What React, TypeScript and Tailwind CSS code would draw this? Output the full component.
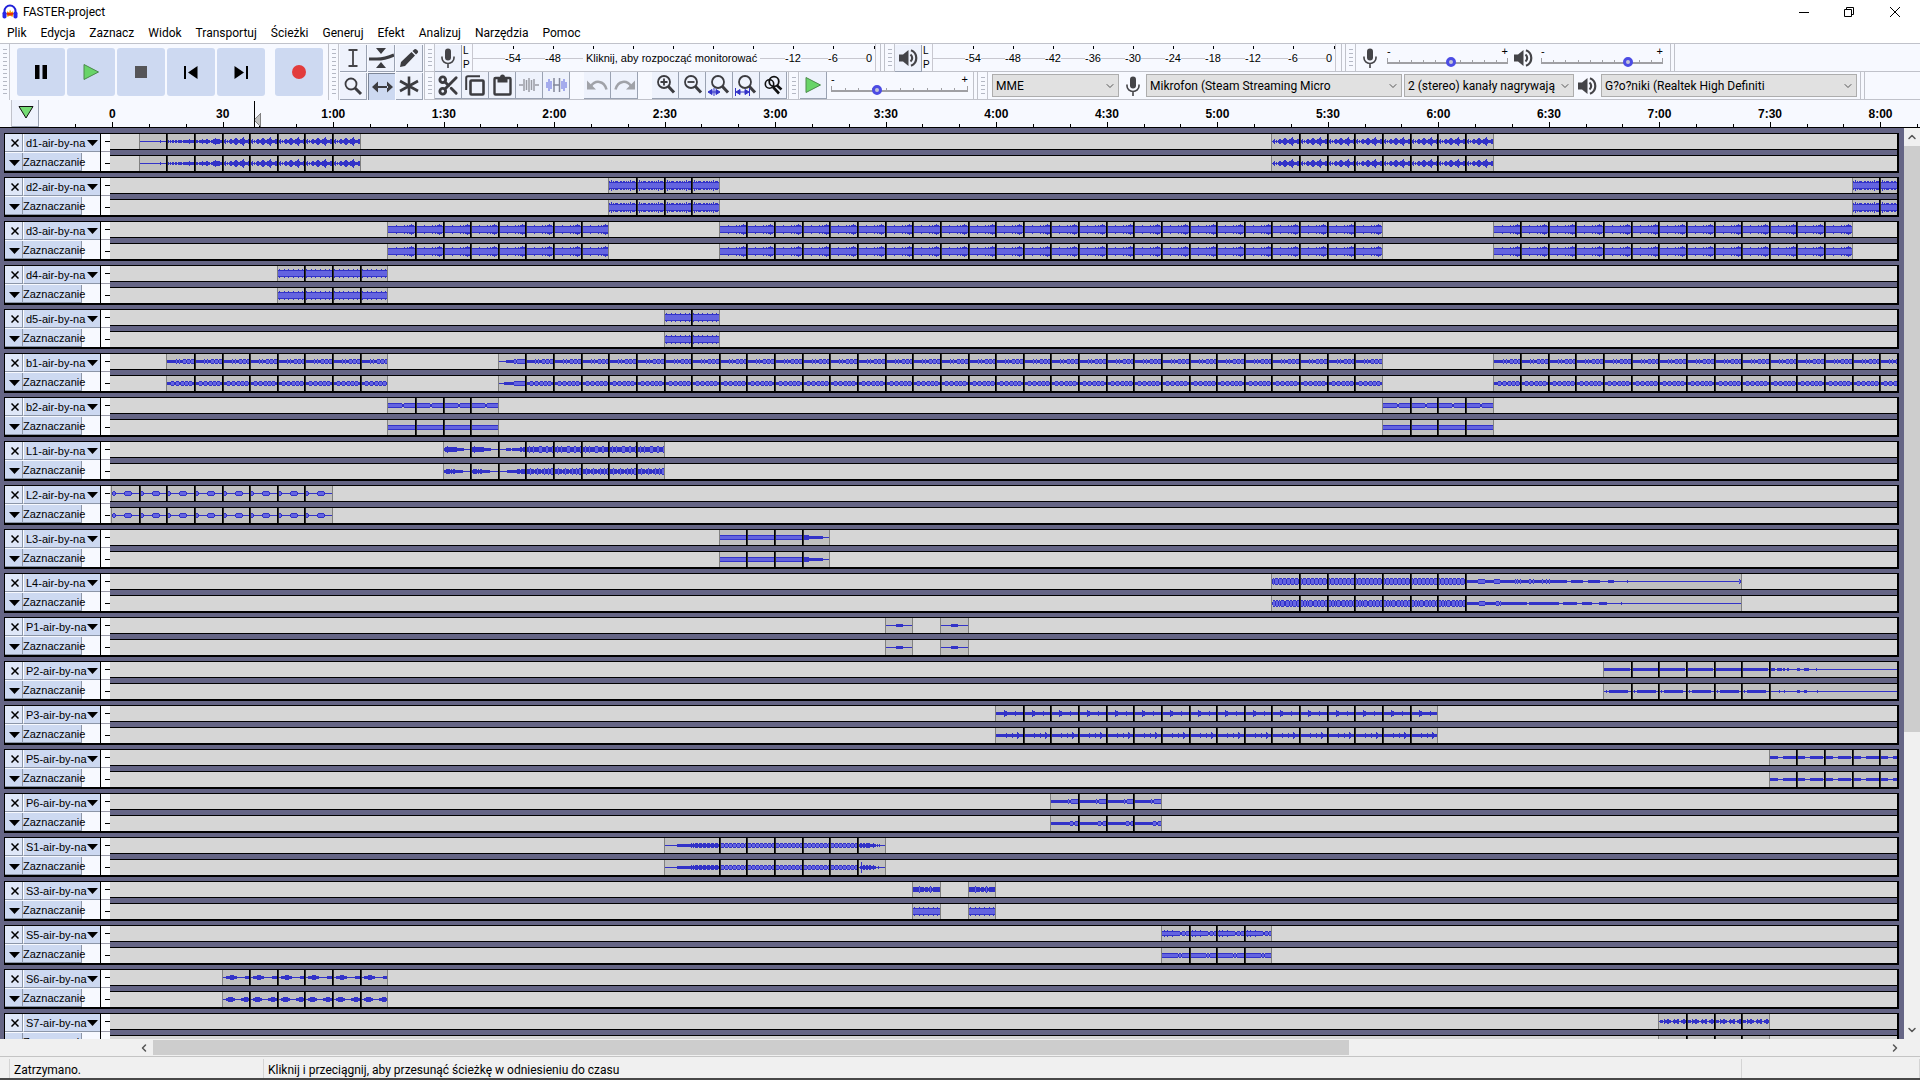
import { useState, type ReactNode } from "react";
import { ChevronDown, ChevronLeft, ChevronRight, ChevronUp, Scissors } from "lucide-react";

const PX_PER_SEC = 3.684;
const BAR = PX_PER_SEC * 7.5;

type Clip = { from: number; to: number; top: string; bottom: string; rms: number };

type TrackData = { name: string; clips: Clip[] };

// one clip per bar between from and to, all with the same wave
const bars = (from: number, to: number, top: string, bottom = top, rms = 9): Clip[] =>
  Array.from({ length: to - from }, (_, i) => ({
    from: from + i,
    to: from + i + 1,
    top,
    bottom,
    rms,
  }));

const clip = (from: number, to: number, top: string, bottom = top, rms = 9): Clip => ({
  from,
  to,
  top,
  bottom,
  rms,
});

// each digit is the half height of one pixel column
const D1 = "0120101221123321122342111221";
const D1_SOFT = "0000000000000000000010000000";
const D1_MID = "0101011011011110111111211111";
const D1_RISE = "0110111211122110112232222111";
const D2 = "4353434443344344343435344434";
const D3 = "3333333343333333433434454430";
const D4 = "3433334333433334333343334333";
const B1 = "1111111112112111222122212222";
const B1_LOW = "1111222112221122212221222111";
const B2 = "2222222222222211222222222222";
const L1 = "2223222322222333222233222232";
const L1_LOW = "1222322212232221223222322332";
const L2 = "1221000000001222222100000000";
const L3 = "2222222222222222222222222222";
const L4 = "2323332333233323332333233322";
const L4_LOW = "1332332323332233323323332332";
const P3 = "1111111132211111111211111111";
const P3_LOW = "1111111111211111211113211111";
const P5 = "1111111100000111111111111100";
const P6 = "1111111111111111121122222222";
const S1 = "1222122212221222122212221222";
const S3 = "2222223222212221232122222222";
const S5 = "2232232222322222221122212222";
const S6 = "0001111222211100000000111111";
const S7 = "0111021122110012112200112211";

const L4_TAIL =
  "21" + "1".repeat(10) + "2222222" + "1".repeat(9) + "222222" + "1".repeat(14) +
  "12121121111111122112111111112111211211111111111111111" +
  "0000" + "1".repeat(12) + "00000" + "1".repeat(12) + "00000000" + "1111110" +
  "00000000000010" + "0".repeat(110);
const L4_TAIL_LOW =
  "11" + "1".repeat(11) + "222222" + "1".repeat(10) + "122212" +
  "1".repeat(26) + "00" + "1".repeat(30) + "0000" + "1".repeat(14) + "00000" +
  "1".repeat(10) + "0000000" + "11111111" + "0".repeat(14) + "1" + "0".repeat(120);

const tracks: TrackData[] = [
  {
    name: "d1-air-by-na",
    clips: [
      clip(1, 2, D1_SOFT),
      clip(2, 3, D1_MID),
      clip(3, 4, D1_RISE),
      ...bars(4, 9, D1),
      ...bars(42, 50, D1),
    ],
  },
  { name: "d2-air-by-na", clips: [...bars(18, 22, D2, D2, 2), ...bars(63, 66, D2, D2, 2)] },
  {
    name: "d3-air-by-na",
    clips: [...bars(10, 18, D3, D3, 2), ...bars(22, 46, D3, D3, 2), ...bars(50, 63, D3, D3, 2)],
  },
  { name: "d4-air-by-na", clips: bars(6, 10, D4, D4, 2) },
  { name: "d5-air-by-na", clips: bars(20, 22, D4, D4, 2) },
  {
    name: "b1-air-by-na",
    clips: [
      ...bars(2, 10, B1, B1_LOW, 1),
      clip(14, 15, "0000000111111112212222222222", "0000011111111112222222222222", 1),
      ...bars(15, 46, B1, B1_LOW, 1),
      ...bars(50, 66, B1, B1_LOW, 1),
    ],
  },
  { name: "b2-air-by-na", clips: [...bars(10, 14, B2, L3, 1), ...bars(46, 50, B2, L3, 1)] },
  {
    name: "L1-air-by-na",
    clips: [
      ...bars(12, 14, "1223222222222111111100000000", "1122221212211111111000000000"),
      clip(14, 15, "0000000111110111111112212222", "0000000011111111112221222222"),
      ...bars(15, 20, L1, L1_LOW, 2),
    ],
  },
  { name: "L2-air-by-na", clips: bars(0, 8, L2, L2, 1) },
  {
    name: "L3-air-by-na",
    clips: [...bars(22, 25, L3, L3, 1), clip(25, 26, "1222221111111111111100000000")],
  },
  {
    name: "L4-air-by-na",
    clips: [...bars(42, 49, L4, L4_LOW, 2), clip(49, 59, L4_TAIL, L4_TAIL_LOW, 1)],
  },
  {
    name: "P1-air-by-na",
    clips: [clip(28, 29, "0000000000111111100000000000"), clip(30, 31, "0000000000111111100000000000")],
  },
  {
    name: "P2-air-by-na",
    clips: [
      ...bars(54, 60, "1111111111111111111111111100", "0010011111111111111111110000"),
      clip(
        60,
        66,
        "01111001111101100110000000011100001111100000001" + "0".repeat(125),
        "0000000001000010000000000001110000111000000000010" + "0".repeat(125)
      ),
    ],
  },
  { name: "P3-air-by-na", clips: bars(32, 48, P3, P3_LOW) },
  { name: "P5-air-by-na", clips: bars(60, 66, P5) },
  { name: "P6-air-by-na", clips: bars(34, 38, P6, "1111111111111111111222112222", 1) },
  {
    name: "S1-air-by-na",
    clips: [
      clip(20, 22, "000000000000" + "1".repeat(13) + "121212221222122212221222122212"),
      ...bars(22, 27, S1, S1, 1),
      clip(27, 28, "0122122122221112110101000000", "0015122122122112110010000000"),
    ],
  },
  { name: "S3-air-by-na", clips: [clip(29, 30, S3, D4, 2), clip(31, 32, S3, D4, 2)] },
  { name: "S5-air-by-na", clips: bars(38, 42, S5, "2222222222222222122122222222", 1) },
  { name: "S6-air-by-na", clips: bars(4, 10, S6, "0001122222110000001112222110") },
  { name: "S7-air-by-na", clips: bars(56, 60, S7) },
];

const wavePath = (wave: string, x: number, width: number, limit = 9) => {
  let d = "";
  for (let i = 0; i < width; i++) {
    const full = Number(wave[i % wave.length]);
    // the light band only shows inside columns that are taller than it
    if (limit < 9 && full <= limit) continue;
    const h = Math.min(full, limit);
    d += `M${x + i} ${7 - h}h1v${2 * h + 1}h-1z`;
  }
  return d;
};

const Lane = ({ clips, channel }: { clips: Clip[]; channel: "top" | "bottom" }) => (
  <svg className="block h-[15px] w-full bg-[#d6d6d6]" shapeRendering="crispEdges">
    {clips.map((c, i) => {
      const x = Math.round(BAR * c.from + 1);
      const end = Math.round(BAR * c.to + 1);
      const joined = i > 0 && clips[i - 1].to === c.from;
      return (
        <g key={c.from}>
          <rect x={x} y="0" width={end - x} height="15" fill="#c0c0c0" />
          <rect x={end} y="0" width="1" height="15" fill="#808080" />
          <path d={wavePath(c[channel], x + 1, end - x - 1)} fill="#3232c8" />
          {c.rms < 9 && (
            <path d={wavePath(c[channel], x + 1, end - x - 1, c.rms)} fill="#6464e0" />
          )}
          <rect x={x} y="0" width="1" height="15" fill={joined ? "#000" : "#808080"} />
          {joined && <rect x={x + 1} y="0" width="1" height="15" fill="#303030" />}
        </g>
      );
    })}
  </svg>
);

const Triangle = () => (
  <svg width="11" height="6" viewBox="0 0 11 6" className="shrink-0">
    <path d="M0 0H11L5.5 6Z" fill="#000" />
  </svg>
);

const Track = ({ track }: { track: TrackData }) => (
  <div className="flex h-10 shrink-0 border-t border-r-2 border-b-2 border-l border-black">
    <div className="flex w-[95px] shrink-0 flex-col gap-px bg-[#f7f9ff] text-[11px] leading-4">
      <div className="flex h-[18px]">
        <button
          aria-label={`Zamknij ${track.name}`}
          className="flex w-[18px] items-center justify-center border-r border-b border-[#8c96a8] bg-[#dfe7f8] pt-px pl-[2px]"
        >
          <svg width="8" height="8" viewBox="0 0 8 8">
            <path d="M0.5 0.5L7.5 7.5M7.5 0.5L0.5 7.5" stroke="#000" strokeWidth="1.5" />
          </svg>
        </button>
        <button className="flex flex-1 items-center border-b border-l border-b-[#8c96a8] border-l-white bg-[#cdd9f1] pl-[2px]">
          <span className="w-[61px] text-left whitespace-nowrap">{track.name}</span>
          <Triangle />
        </button>
      </div>
      <div className="flex h-[18px]">
        <button
          aria-label={`Zwiń ${track.name}`}
          className="flex w-[18px] items-center justify-center border-r border-b border-[#8c96a8] bg-[#cdd9f1] pt-[2px] pl-[2px]"
        >
          <Triangle />
        </button>
        <button className="flex w-[59px] border-r border-b border-[#8c96a8] bg-[#cdd9f1] pt-px whitespace-nowrap">
          Zaznaczanie
        </button>
      </div>
    </div>
    <div className="flex w-[10px] shrink-0 flex-col border-l border-black bg-[#fbfcff]">
      <div className="flex h-[18px] items-center justify-end border-b border-[#9a9aa8] pb-[2px]">
        <div className="h-px w-[5px] bg-black" />
      </div>
      <div className="flex flex-1 items-center justify-end pt-[4px]">
        <div className="h-px w-[5px] bg-black" />
      </div>
    </div>
    <div className="min-w-0 flex-1">
      <Lane clips={track.clips} channel="top" />
      <div className="h-[7px] border-y border-black bg-[#656585]" />
      <Lane clips={track.clips} channel="bottom" />
    </div>
  </div>
);

const Grabber = () => (
  <div className="flex w-[10px] shrink-0 justify-center border-r border-[#c4c6ce] py-[5px]">
    <div className="w-1 bg-[repeating-linear-gradient(#b4b8c4_0_1px,transparent_1px_4px)]" />
  </div>
);

const Divider = () => <div className="w-[5px] shrink-0 border-x border-[#c0c2ca]" />;

const ToolButton = ({
  label,
  active,
  children,
}: {
  label: string;
  active?: boolean;
  children: ReactNode;
}) => (
  <button
    aria-label={label}
    title={label}
    className={
      active
        ? "flex h-[27px] w-[27px] shrink-0 items-center justify-center border-t border-l border-[#7c8698] bg-[#cdd9f1]"
        : "flex h-[27px] w-[27px] shrink-0 items-center justify-center border-r border-b border-[#9aa2b2] bg-[#eef2fc]"
    }
  >
    {children}
  </button>
);

const BigButton = ({ label, children }: { label: string; children: ReactNode }) => (
  <button
    aria-label={label}
    title={label}
    className="flex size-12 items-center justify-center rounded-[3px] bg-[#cdd9f1]"
  >
    {children}
  </button>
);

const MicIcon = () => (
  <svg width="14" height="20" viewBox="0 0 14 20" className="shrink-0">
    <rect x="4" y="0.5" width="6" height="12" rx="3" fill="#444448" />
    <path d="M1 8.5V10a6 5.5 0 0 0 12 0V8.5M7 15.5V20" stroke="#444448" strokeWidth="1.6" fill="none" />
  </svg>
);

const SpeakerIcon = () => (
  <svg width="19" height="18" viewBox="0 0 19 18" className="shrink-0">
    <path d="M0 5.5H4L9.5 1V17L4 12.5H0Z" fill="#444448" />
    <path d="M11.5 5.5a4.5 4.5 0 0 1 0 7M12 1.2a8.4 8.4 0 0 1 0 15.6" stroke="#444448" strokeWidth="2.2" fill="none" />
  </svg>
);

const ZoomIcon = ({ children }: { children?: ReactNode }) => (
  <svg width="22" height="22" viewBox="0 0 22 22" fill="none" stroke="#3c3c40">
    <circle cx="10" cy="8" r="6" strokeWidth="1.8" />
    <path d="M14.2 12.2L20 18.5" strokeWidth="3" />
    {children}
  </svg>
);

const PlayIcon = () => (
  <svg width="17" height="18" viewBox="0 0 17 18">
    <path d="M1 1.5L15.5 9L1 16.5Z" fill="#68d468" stroke="#4a8a4a" />
  </svg>
);

const LevelSlider = ({
  label,
  start,
  className,
}: {
  label: string;
  start: number;
  className: string;
}) => {
  const [value, setValue] = useState(start);

  return (
    <div className={className}>
      <div className="flex justify-between text-[11px] leading-[9px]">
        <span>-</span>
        <span>+</span>
      </div>
      <div className="grid items-center [&>*]:col-start-1 [&>*]:row-start-1">
        <svg width="100%" height="10" shapeRendering="crispEdges">
          <rect x="0" y="5" width="100%" height="2" fill="#a0a0a4" />
          {Array.from({ length: 10 }, (_, i) => (
            <rect key={i} x={`${i * 10}%`} y="3" width="1" height="3" fill="#a0a0a4" />
          ))}
          <rect x="0" y="1" width="1" height="5" fill="#a0a0a4" />
          <rect x="99%" y="1" width="1" height="5" fill="#a0a0a4" />
        </svg>
        <input
          type="range"
          aria-label={label}
          value={value}
          onChange={(e) => setValue(Number(e.target.value))}
          className="m-0 h-3 w-full appearance-none bg-transparent [&::-webkit-slider-thumb]:size-[10px] [&::-webkit-slider-thumb]:appearance-none [&::-webkit-slider-thumb]:rounded-full [&::-webkit-slider-thumb]:border-[3px] [&::-webkit-slider-thumb]:border-[#4c4ce4] [&::-webkit-slider-thumb]:bg-[#c4c4d8]"
        />
      </div>
    </div>
  );
};

const levels = ["-54", "-48", "-42", "-36", "-30", "-24", "-18", "-12", "-6"];

const Meter = ({ message }: { message?: string }) => (
  <div className="flex">
    <div className="flex w-[10px] flex-col justify-between pl-px text-[10px] leading-[13px]">
      <span>L</span>
      <span>P</span>
    </div>
    <div className="relative flex w-[404px] border-x border-[#c8c8d0] bg-[linear-gradient(#c8c8d0,#c8c8d0)] bg-[length:100%_1px] bg-[position:0_14px] bg-no-repeat pl-5 text-[11px] leading-[15px]">
      {levels.map((level, i) => (
        <div key={level} className="flex w-10 flex-col items-center gap-[2px] pt-[2px]">
          <div className="h-[3px] w-px bg-black" />
          {/* the message takes the place of the labels in the middle */}
          {(!message || i < 2 || i > 6) && <span className="bg-[#f7f9ff]">{level}</span>}
        </div>
      ))}
      <div className="flex flex-1 flex-col items-end gap-[2px] pt-[2px]">
        <div className="h-[3px] w-px bg-black" />
        <span className="bg-[#f7f9ff] pr-[3px]">0</span>
      </div>
      {message && (
        <button className="absolute top-[7px] left-[110px] bg-[#f7f9ff] px-[3px] whitespace-nowrap">
          {message}
        </button>
      )}
    </div>
  </div>
);

const DeviceSelect = ({
  label,
  value,
  className,
}: {
  label: string;
  value: string;
  className: string;
}) => (
  <div className={`${className} grid h-[23px] shrink-0 items-center [&>*]:col-start-1 [&>*]:row-start-1`}>
    <select
      aria-label={label}
      className="h-full w-full min-w-0 appearance-none border border-[#adadad] bg-[#e1e1e1] pr-[18px] pl-[3px] font-[Roboto,'Open_Sans',sans-serif] text-[12px]"
    >
      <option>{value}</option>
    </select>
    <ChevronDown size={12} strokeWidth={2} color="#555" className="pointer-events-none mr-[3px] justify-self-end" />
  </div>
);

const TransportBar = () => (
  <div className="flex">
    <Grabber />
    <div className="flex items-center gap-[2px] pr-[5px] pl-[7px]">
      <BigButton label="Wstrzymaj">
        <svg width="12" height="14" viewBox="0 0 12 14">
          <path d="M0 0h4.5v14H0zM7.5 0H12v14H7.5z" fill="#000" />
        </svg>
      </BigButton>
      <BigButton label="Odtwarzaj">
        <PlayIcon />
      </BigButton>
      <BigButton label="Zatrzymaj">
        <svg width="12" height="12">
          <rect width="12" height="12" fill="#555558" />
        </svg>
      </BigButton>
      <BigButton label="Przejdź na początek">
        <svg width="14" height="13" viewBox="0 0 14 13">
          <path d="M0 0h2v13H0zM13.5 0v13L4 6.5z" fill="#000" />
        </svg>
      </BigButton>
      <BigButton label="Przejdź na koniec">
        <svg width="14" height="13" viewBox="0 0 14 13">
          <path d="M12 0h2v13h-2zM0.5 0v13L10 6.5z" fill="#000" />
        </svg>
      </BigButton>
      <div className="ml-2 flex">
        <BigButton label="Nagrywaj">
          <svg width="14" height="14">
            <circle cx="7" cy="7" r="7" fill="#e23c3c" />
          </svg>
        </BigButton>
      </div>
    </div>
  </div>
);

const ToolsBar = () => (
  <div className="flex border-l border-[#c0c2ca]">
    <Grabber />
    <div className="grid grid-cols-3 gap-px px-px pt-px">
      <ToolButton label="Zaznaczanie">
        <svg width="10" height="18" viewBox="0 0 10 18">
          <path d="M0.5 1H9.5M0.5 17H9.5M5 1V17" stroke="#444448" strokeWidth="1.8" />
        </svg>
      </ToolButton>
      <ToolButton label="Obwiednia">
        <svg width="25" height="22" viewBox="0 0 25 22">
          <path d="M7 1H17L12 7ZM7 21H17L12 15Z" fill="#3c3c40" />
          <path d="M0 12H8C14 12 18 11 25 8" stroke="#3c3c40" strokeWidth="3" fill="none" />
        </svg>
      </ToolButton>
      <ToolButton label="Rysowanie">
        <svg width="20" height="20" viewBox="0 0 20 20" fill="#3c3c40">
          <path d="M1 19L2 14L12.5 4L16 7.5L6 18ZM13.5 3L15.5 1.2Q16.5 0.5 17.5 1.5L18.8 2.8Q19.5 3.8 18.8 4.8L17 6.5Z" />
        </svg>
      </ToolButton>
      <ToolButton label="Powiększanie">
        <svg width="20" height="20" viewBox="0 0 20 20" fill="none" stroke="#3c3c40">
          <circle cx="8" cy="8" r="5.5" strokeWidth="1.8" />
          <path d="M12 12L18 18" strokeWidth="3" />
        </svg>
      </ToolButton>
      <ToolButton label="Przesuwanie w czasie" active>
        <svg width="21" height="12" viewBox="0 0 21 12">
          <path d="M0 6L6 0.5V11.5ZM21 6L15 0.5V11.5ZM5 5H16V7H5Z" fill="#3c3c40" />
        </svg>
      </ToolButton>
      <ToolButton label="Narzędzie uniwersalne">
        <svg width="20" height="20" viewBox="0 0 20 20">
          <path d="M10 0.5V19.5M1 5L19 15M19 5L1 15" stroke="#3c3c40" strokeWidth="2.6" />
        </svg>
      </ToolButton>
    </div>
  </div>
);

const LevelsRow = () => (
  <div className="flex h-[28px] border-b border-[#c0c2ca]">
    <Grabber />
    <div className="flex pt-px">
      <ToolButton label="Monitorowanie nagrywania">
        <MicIcon />
      </ToolButton>
    </div>
    <Meter message="Kliknij, aby rozpocząć monitorować" />
    <div className="ml-[4px] flex">
      <Divider />
    </div>
    <Grabber />
    <div className="flex pt-px">
      <ToolButton label="Monitorowanie odtwarzania">
        <SpeakerIcon />
      </ToolButton>
    </div>
    <Meter />
    <div className="ml-[5px] flex">
      <Divider />
    </div>
    <Grabber />
    <div className="flex items-center gap-[6px] px-[7px]">
      <MicIcon />
      <LevelSlider label="Głośność nagrywania" start={53} className="ml-[4px] w-[121px]" />
      <SpeakerIcon />
      <LevelSlider label="Głośność odtwarzania" start={73} className="ml-[2px] w-[122px]" />
    </div>
    <Divider />
  </div>
);

const EditRow = () => (
  <div className="flex h-[28px] border-b border-[#c0c2ca]">
    <Grabber />
    <div className="flex">
      <ToolButton label="Wytnij">
        <Scissors size={23} strokeWidth={3} color="#3c3c40" />
      </ToolButton>
      <ToolButton label="Kopiuj">
        <svg width="20" height="21" viewBox="0 0 20 21" fill="none" stroke="#3c3c40">
          <rect x="5.5" y="5.5" width="13" height="14" rx="1" strokeWidth="2.6" />
          <path d="M1.2 15V3Q1.2 1.2 3 1.2H15" strokeWidth="2" />
        </svg>
      </ToolButton>
      <ToolButton label="Wklej">
        <svg width="19" height="22" viewBox="0 0 19 22">
          <rect x="1.5" y="4" width="16" height="16.5" rx="1" fill="none" stroke="#3c3c40" strokeWidth="2.4" />
          <path d="M4.5 8.5V3.5H7Q7 0.5 9.5 0.5T12 3.5H14.5V8.5Z" fill="#3c3c40" />
        </svg>
      </ToolButton>
      <ToolButton label="Przytnij">
        <svg width="20" height="16" viewBox="0 0 20 16" stroke="#9a9ca4" strokeWidth="1.5">
          <path d="M0 8H4M16 8H20M5 2V14M7.5 3V13M10 1V15M12.5 3V13M15 2V14" />
        </svg>
      </ToolButton>
      <ToolButton label="Wycisz">
        <svg width="21" height="16" viewBox="0 0 21 16" strokeWidth="1.5" fill="none">
          <path d="M1 5V11M3 2V14M5 4V12M16 4V12M18 2V14M20 5V11" stroke="#8c94e8" />
          <path d="M7 8H14M8 1V15M13.5 1V15" stroke="#84889a" />
        </svg>
      </ToolButton>
    </div>
    <div className="ml-[14px] flex">
      <ToolButton label="Cofnij">
        <svg width="21" height="12" viewBox="0 0 21 12">
          <path d="M0 1.5V10.5H9Z" fill="#a0a2a8" />
          <path d="M4 7C8 1 17 1 19.5 10.5" fill="none" stroke="#a0a2a8" strokeWidth="2.5" />
        </svg>
      </ToolButton>
      <ToolButton label="Ponów">
        <svg width="21" height="12" viewBox="0 0 21 12">
          <path d="M21 1.5V10.5H12Z" fill="#a0a2a8" />
          <path d="M17 7C13 1 4 1 1.5 10.5" fill="none" stroke="#a0a2a8" strokeWidth="2.5" />
        </svg>
      </ToolButton>
    </div>
    <div className="ml-[14px] flex">
      <ToolButton label="Powiększ">
        <ZoomIcon>
          <path d="M6.5 8H13.5M10 4.5V11.5" strokeWidth="1.8" />
        </ZoomIcon>
      </ToolButton>
      <ToolButton label="Pomniejsz">
        <ZoomIcon>
          <path d="M6.5 8H13.5" strokeWidth="1.8" />
        </ZoomIcon>
      </ToolButton>
      <ToolButton label="Dopasuj zaznaczenie">
        <ZoomIcon>
          <path d="M0 18L4 15.5V20.5ZM12 18L8 15.5V20.5ZM6 14V22M4 18H8" fill="#3232c8" stroke="#3232c8" strokeWidth="1" />
        </ZoomIcon>
      </ToolButton>
      <ToolButton label="Dopasuj projekt">
        <ZoomIcon>
          <path d="M1 18L5 15.5V20.5ZM14 18L10 15.5V20.5ZM0.5 14V22M14.5 14V22M4 18H11" fill="#3232c8" stroke="#3232c8" strokeWidth="1" />
        </ZoomIcon>
      </ToolButton>
      <ToolButton label="Przełącz powiększenie">
        <svg width="20" height="20" viewBox="0 0 20 20" fill="none" stroke="#111">
          <circle cx="11" cy="6.5" r="4.8" strokeWidth="1.8" />
          <circle cx="6.5" cy="9" r="4.2" strokeWidth="1.6" />
          <path d="M13.5 10L18.5 14.5M10 12L16 18.5" strokeWidth="2.6" />
        </svg>
      </ToolButton>
    </div>
    <div className="ml-px flex border-l border-[#c0c2ca]">
      <Grabber />
    </div>
    <div className="flex pl-px">
      <ToolButton label="Odtwarzaj z prędkością">
        <PlayIcon />
      </ToolButton>
    </div>
    <LevelSlider label="Prędkość odtwarzania" start={32} className="mt-[3px] ml-[4px] w-[137px]" />
    <div className="ml-[5px] flex">
      <Divider />
    </div>
    <Grabber />
    <div className="flex items-center pr-[3px] pl-[4px]">
      <DeviceSelect label="Serwer dźwięku" value="MME" className="w-[127px]" />
      <div className="flex w-[27px] justify-center">
        <MicIcon />
      </div>
      <DeviceSelect label="Urządzenie nagrywania" value="Mikrofon (Steam Streaming Micro" className="w-[256px]" />
      <DeviceSelect label="Kanały nagrywania" value="2 (stereo) kanały nagrywając" className="ml-[2px] w-[170px]" />
      <div className="flex w-[27px] justify-center">
        <SpeakerIcon />
      </div>
      <DeviceSelect label="Urządzenie odtwarzania" value="G?o?niki (Realtek High Definiti" className="w-[256px]" />
    </div>
    <Divider />
  </div>
);

const formatTime = (sec: number) =>
  sec < 60 ? String(sec) : `${Math.floor(sec / 60)}:${String(sec % 60).padStart(2, "0")}`;

const Timeline = () => (
  <div className="flex h-[28px] border-b border-black bg-[#f7f9ff]">
    <div className="w-3 shrink-0 border-r border-[#c0c2ca]" />
    <button
      aria-label="Przypnij głowicę"
      className="flex w-[27px] shrink-0 justify-center border-r border-b border-[#9aa2b2] bg-[#eef2fc] pt-[6px] pl-px"
    >
      <svg width="16" height="13" viewBox="0 0 16 13" className="block">
        <path d="M1 0.5H15L8 12Z" fill="#74dc74" stroke="#111" />
      </svg>
    </button>
    <div className="grid min-w-0 flex-1 overflow-hidden [&>*]:col-start-1 [&>*]:row-start-1">
      <svg width="100%" height="27" shapeRendering="crispEdges">
        {Array.from({ length: 51 }, (_, i) => (
          <rect
            key={i}
            x={Math.round(73 + (i - 1) * 10 * PX_PER_SEC)}
            y={(i - 1) % 3 === 0 ? 22 : 24}
            width="1"
            height="5"
            fill="#000"
          />
        ))}
        <path d="M215 20L221 14V26Z" fill="#c0c0c0" stroke="#808080" />
        <rect x="215" y="1" width="1" height="26" fill="#000" />
      </svg>
      <div className="flex overflow-hidden pt-[5px] pl-[18px] text-[12px] leading-[18px] font-bold">
        {Array.from({ length: 17 }, (_, i) => (
          <div key={i} className="shrink-0 text-center" style={{ width: 30 * PX_PER_SEC }}>
            {formatTime(i * 30)}
          </div>
        ))}
      </div>
    </div>
  </div>
);

const menus = [
  "Plik",
  "Edycja",
  "Zaznacz",
  "Widok",
  "Transportuj",
  "Ścieżki",
  "Generuj",
  "Efekt",
  "Analizuj",
  "Narzędzia",
  "Pomoc",
];

const TitleBar = () => (
  <header className="flex h-[22px] items-center justify-between pt-px pl-[2px]">
    <div className="flex items-center gap-[5px]">
      <svg width="16" height="16" viewBox="0 0 16 16">
        <path d="M2.5 9V7a5.5 5.5 0 0 1 11 0V9" fill="none" stroke="#2020d8" strokeWidth="2" />
        <path d="M4.5 10L5.5 7L7 9L8 5.5L9.5 8.5L11 7L11.5 10L10.5 13L8 11.5L5.5 13Z" fill="#f8b000" />
        <path d="M4 9.5L6 8.5L8 9L10 8.5L12 9.5L10 11.5H6Z" fill="#e83010" />
        <rect x="0.5" y="7.5" width="4" height="7" rx="1.8" fill="#2828e8" />
        <rect x="11.5" y="7.5" width="4" height="7" rx="1.8" fill="#2828e8" />
      </svg>
      <h1>FASTER-project</h1>
    </div>
    <div className="flex pr-[2px]">
      <button aria-label="Minimalizuj" className="flex w-[45px] items-center justify-center">
        <svg width="10" height="10">
          <path d="M0 5.5H10" stroke="#000" />
        </svg>
      </button>
      <button aria-label="Przywróć" className="flex w-[46px] items-center justify-center">
        <svg width="10" height="10" fill="none" stroke="#000">
          <path d="M0.5 2.5H7.5V9.5H0.5ZM2.5 2.5V0.5H9.5V7.5H7.5" />
        </svg>
      </button>
      <button aria-label="Zamknij" className="flex w-[46px] items-center justify-center">
        <svg width="10" height="10" stroke="#000">
          <path d="M0 0L10 10M10 0L0 10" />
        </svg>
      </button>
    </div>
  </header>
);

const App = () => {
  return (
    <div className="flex h-screen flex-col overflow-hidden bg-white font-['Liberation_Sans',Arial,sans-serif] text-black">
      <div className="font-[Roboto,'Open_Sans',sans-serif] text-[12px] leading-[18px]">
        <TitleBar />
        <nav className="flex h-[21px] items-center">
          {menus.map((menu) => (
            <button key={menu} className="px-[7px]">
              {menu}
            </button>
          ))}
        </nav>
      </div>

      {/* Toolbars */}
      <div className="flex shrink-0 overflow-hidden border-t border-[#c0c2ca] bg-[#f7f9ff]">
        <TransportBar />
        <ToolsBar />
        <div className="min-w-0 flex-1 border-l border-[#c0c2ca]">
          <LevelsRow />
          <EditRow />
        </div>
      </div>

      <Timeline />

      {/* Tracks */}
      <div className="flex min-h-0 flex-1">
        <main className="flex min-w-0 flex-1 flex-col gap-1 overflow-hidden bg-[#656585] pt-[5px] pr-[5px] pl-1">
          {tracks.map((track) => (
            <Track key={track.name} track={track} />
          ))}
        </main>
        <div className="flex w-4 shrink-0 flex-col items-center bg-[#f0f0f0]">
          <button aria-label="W górę" className="flex h-[18px] items-center">
            <ChevronUp size={12} strokeWidth={3} color="#555" />
          </button>
          <div className="flex w-full flex-1 flex-col">
            <div className="h-[67%] bg-[#cdcdcd]" />
          </div>
          <button aria-label="W dół" className="flex h-[18px] items-center">
            <ChevronDown size={12} strokeWidth={3} color="#555" />
          </button>
        </div>
      </div>

      <div className="flex h-[17px] shrink-0 bg-[#f0f0f0] pr-4 pl-[136px]">
        <button aria-label="W lewo" className="flex w-[17px] items-center pl-[2px]">
          <ChevronLeft size={12} strokeWidth={3} color="#555" />
        </button>
        <div className="flex-1 py-px">
          <div className="h-full w-[69%] bg-[#cdcdcd]" />
        </div>
        <button aria-label="W prawo" className="flex w-[17px] items-center pl-[2px]">
          <ChevronRight size={12} strokeWidth={3} color="#555" />
        </button>
      </div>

      <footer className="flex h-[24px] shrink-0 border-t border-b-2 border-t-[#c4c4c4] border-b-[#484848] bg-[#f0f0f0] pt-[2px] font-[Roboto,'Open_Sans',sans-serif] text-[12px] leading-[22px]">
        <div className="w-[10px] border-r border-[#d4d4d4]" />
        <div className="w-[254px] border-r border-[#d4d4d4] pl-1">Zatrzymano.</div>
        <div className="flex-1 border-r border-[#d4d4d4] pl-1">
          Kliknij i przeciągnij, aby przesunąć ścieżkę w odniesieniu do czasu
        </div>
        <div className="w-[178px] border-r border-[#d4d4d4]" />
      </footer>
    </div>
  );
};

export default App;
